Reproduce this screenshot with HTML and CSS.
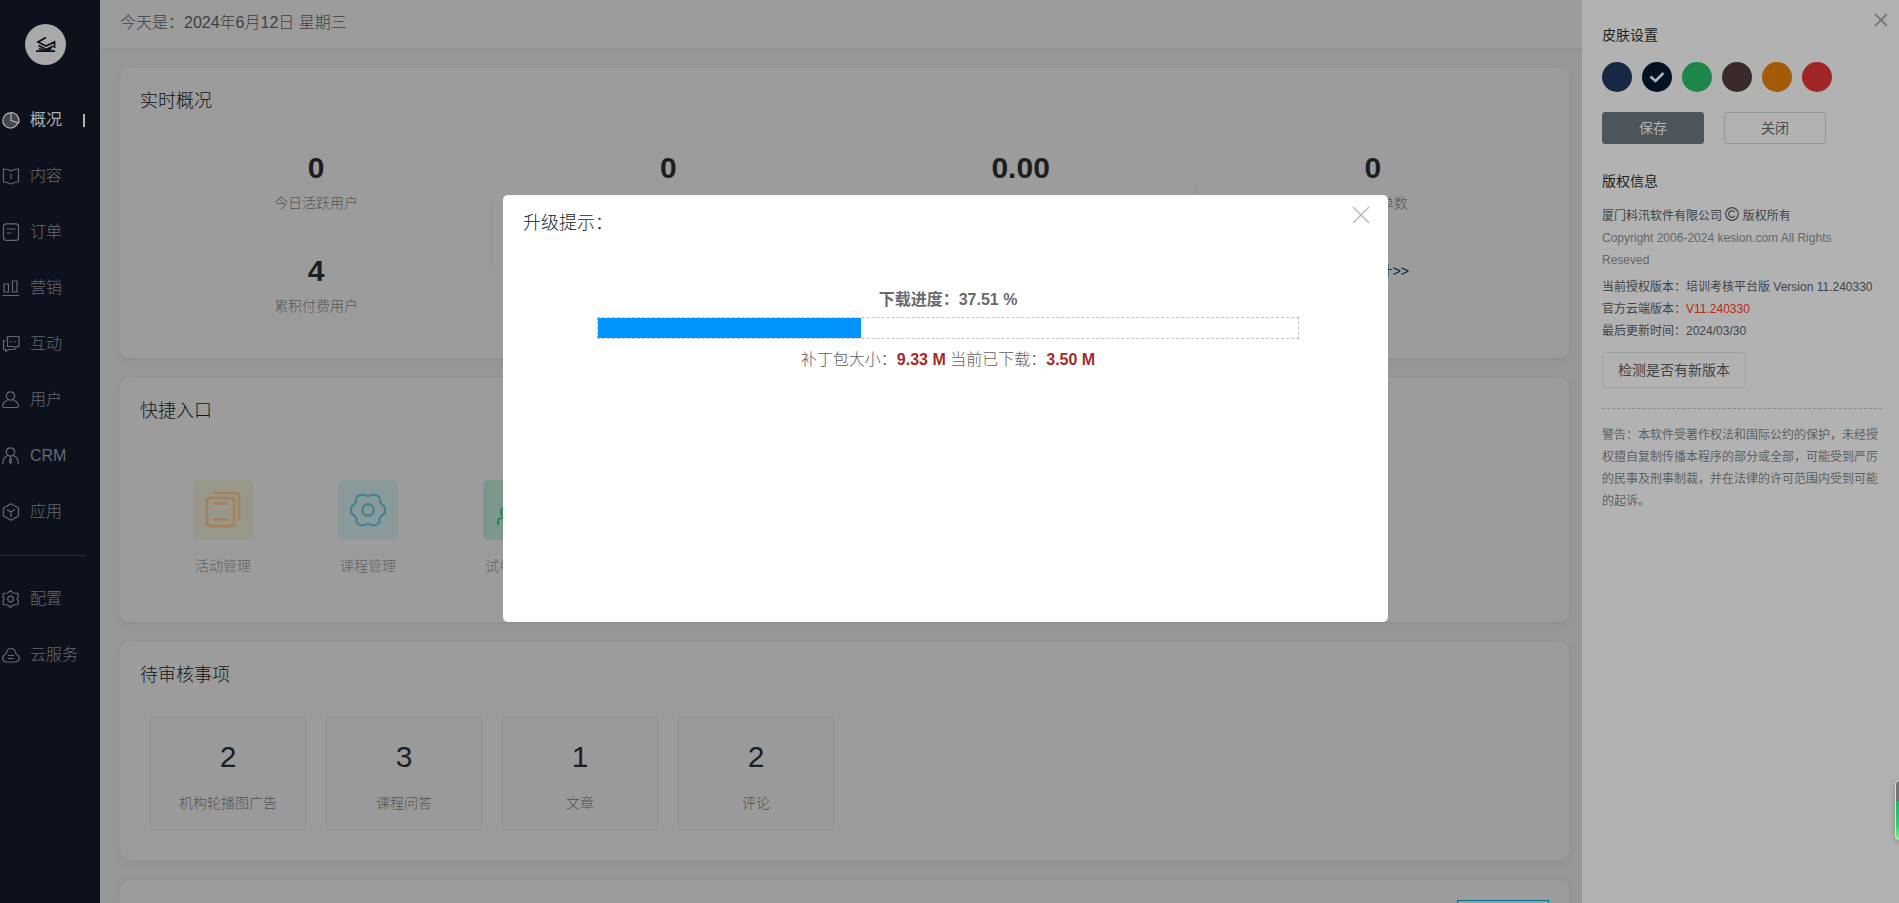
FILE: index.html
```html
<!DOCTYPE html>
<html lang="zh-CN">
<head>
<meta charset="utf-8">
<title>概况</title>
<link rel="stylesheet" href="styles.css">
</head>
<body>
<div class="app">
  <nav class="sidebar">
    <a class="logo" href="#" aria-label="首页"><svg viewBox="0 0 41 41" width="41" height="41" fill="none" stroke="#0d111b" stroke-width="1.8"><path d="M21 13.500L13 18l8 4 8.500-4v6M13.500 21.500l8 4 6.500-3.500M14 24.500l6.500 2.500 6-2.500M11 27.200h19"/></svg></a>
    <ul class="menu">
      <li><a class="item active" href="#"><svg class="ico" viewBox="0 0 18 18"><circle cx="8.500" cy="9.500" r="7.700" fill="#43464e"/><path d="M9 1.500v8l7.500 2.500A8 8 0 0 0 9 1.500z" fill="#43464e"/></svg>概况</a></li>
      <li><a class="item" href="#"><svg class="ico" viewBox="0 0 18 18"><path d="M1.500 2q4.500 0 7.500 2 3-2 7.500-2v13q-4 0-7.500 2-3.500-2-7.500-2zM9 7v5"/></svg>内容</a></li>
      <li><a class="item" href="#"><svg class="ico" viewBox="0 0 18 18"><rect x="1.500" y=".8" width="15" height="16.500" rx="2.500"/><path d="M4.500 6h9M4.500 10h5"/></svg>订单</a></li>
      <li><a class="item" href="#"><svg class="ico" viewBox="0 0 18 18"><path d="M2 5h4.500v8H2zM10.500 2h4.500v11h-4.500zM.5 16.500h16.500"/></svg>营销</a></li>
      <li><a class="item" href="#"><svg class="ico" viewBox="0 0 18 18"><path d="M5.500 1.500h11.500v10h-2l-1.500 1.500-2-1.500h-6zM3.500 5.500h-2v9h2v2l3-2h7M9 6v1.500M13 6v1.500"/></svg>互动</a></li>
      <li><a class="item" href="#"><svg class="ico" viewBox="0 0 18 18"><circle cx="8.500" cy="5" r="4.200"/><path d="M5.500 9.500Q.8 10.500.8 15q0 1.500 1.500 1.500h12.500q1.500 0 1.500-1.500 0-4.500-4.700-5.500"/></svg>用户</a></li>
      <li><a class="item" href="#"><svg class="ico" viewBox="0 0 18 18"><circle cx="8.500" cy="5" r="4.200"/><path d="M5.500 8.500Q.8 10.500.8 17M11.500 8.500q4.800 2 4.800 8.500M8.500 10.500l1.200 4-1.200 2-1.200-2z"/></svg>CRM</a></li>
      <li><a class="item" href="#"><svg class="ico" viewBox="0 0 18 18"><path d="M9 .8l7.500 4.200v8L9 17.200 1.500 13V5zM5 6.500L9 9l4-2.500M9 9v5"/></svg>应用</a></li>
    </ul>
    <ul class="menu menu-extra">
      <li><a class="item" href="#"><svg class="ico" viewBox="0 0 18 18"><path d="M8.500.8l3 2.200 4.500.5.2 3.500-1.200 2 1.200 2-.2 3.500-4.500.5-3 2.200-3-2.200-4.200-.5-.2-3.500L2.200 9 1 7l.3-3.500L5.500 3z"/><circle cx="8.500" cy="9" r="2.800"/></svg>配置</a></li>
      <li><a class="item" href="#"><svg class="ico" viewBox="0 0 18 18"><path d="M4 16q-3.200-.5-3.200-4Q.8 9 4 8q1-5.500 5-5.500T14 8q3.200 1 3.200 4 0 3.500-3.200 4zM6 9.500h6M6 12.500h6"/></svg>云服务</a></li>
    </ul>
  </nav>

  <main class="main">
    <header class="topbar">今天是：2024年6月12日 星期三</header>
    <div class="cards">
      <section class="card realtime">
        <h2>实时概况</h2>
        <div class="stats">
          <div class="stat rule"><b>0</b><span>今日活跃用户</span></div>
          <div class="stat"><b>0</b></div>
          <div class="stat rule rule-high"><b>0.00</b></div>
          <div class="stat"><b>0</b><span>今日订单数</span></div>
          <div class="stat"><b>4</b><span>累积付费用户</span></div>
          <div class="stat"></div>
          <div class="stat"></div>
          <div class="stat"><a href="#">查看统计&gt;&gt;</a></div>
        </div>
      </section>
      <section class="card quick">
        <h2>快捷入口</h2>
        <div class="links">
          <a class="link" href="#"><span class="tile sand"><svg viewBox="0 0 60 60"><rect x="14" y="18" width="27" height="28" rx="3"/><path d="M21 13h22q3 0 3 3v23M21 23.500h13M21 39.500h13"/></svg></span>活动管理</a>
          <a class="link" href="#"><span class="tile aqua"><svg viewBox="0 0 60 60"><path d="M25 14.500q5 3 10 0 5 1 6.500 3-.5 6 5 9 .8 3.500 0 7-5.500 3-5 9-2 2.500-6.500 3-5-3-10 0-4.500-.5-6.500-3 .5-6-5-9-.8-3.500 0-7 5.500-3 5-9 2-2.500 6.500-3z"/><circle cx="30" cy="30" r="5.800"/></svg></span>课程管理</a>
          <a class="link" href="#"><span class="tile mint"><svg viewBox="0 0 60 60"><circle cx="23" cy="32" r="5"/><path d="M15 45v-3q0-4 4-4h8q4 0 4 4v3"/></svg></span>试卷管理</a>
        </div>
      </section>
      <section class="card pending">
        <h2>待审核事项</h2>
        <div class="boxes">
          <a class="box" href="#"><b>2</b>机构轮播图广告</a>
          <a class="box" href="#"><b>3</b>课程问答</a>
          <a class="box" href="#"><b>1</b>文章</a>
          <a class="box" href="#"><b>2</b>评论</a>
        </div>
      </section>
      <section class="card last"><button class="range" type="button" aria-label="时间范围"></button></section>
    </div>
  </main>

  <aside class="panel">
    <button class="x panel-x" type="button" aria-label="关闭面板"><svg viewBox="0 0 14 14" width="14" height="14"><path d="M1 1l12 12M13 1L1 13" stroke="#74797c" stroke-width="1.800"/></svg></button>
    <h3>皮肤设置</h3>
    <div class="swatches">
      <button class="sw navy" type="button" aria-label="深蓝"></button>
      <button class="sw ink" type="button" aria-label="墨黑"><svg viewBox="0 0 30 30" width="30" height="30" fill="none" stroke="#b2b2b2" stroke-width="2.500"><path d="M8.500 14.500l5 4.500 8-8"/></svg></button>
      <button class="sw green" type="button" aria-label="绿色"></button>
      <button class="sw brown" type="button" aria-label="棕色"></button>
      <button class="sw orange" type="button" aria-label="橙色"></button>
      <button class="sw red" type="button" aria-label="红色"></button>
    </div>
    <div class="actions">
      <button class="btn solid" type="button">保存</button>
      <button class="btn" type="button">关闭</button>
    </div>
    <h3>版权信息</h3>
    <p class="company">厦门科汛软件有限公司 <svg viewBox="0 0 14 14" width="14" height="14" fill="none" stroke="#3f4346" stroke-width="1.200"><circle cx="7" cy="7" r="6.300"/><path d="M9.800 5.200A3.300 3.300 0 1 0 9.800 8.800"/></svg> 版权所有</p>
    <p class="soft">Copyright 2006-2024 kesion.com All Rights Reseved</p>
    <div class="version">
      <p>当前授权版本：培训考核平台版 Version 11.240330</p>
      <p>官方云端版本：<span class="new">V11.240330</span></p>
      <p>最后更新时间：2024/03/30</p>
    </div>
    <button class="check" type="button">检测是否有新版本</button>
    <p class="warning">警告：本软件受著作权法和国际公约的保护，未经授权擅自复制传播本程序的部分或全部，可能受到严厉的民事及刑事制裁，并在法律的许可范围内受到可能的起诉。</p>
  </aside>
</div>

<div class="overlay">
  <div class="dialog" role="dialog" aria-labelledby="dlg-title">
    <h2 id="dlg-title">升级提示：</h2>
    <button class="x dialog-x" type="button" aria-label="关闭"><svg viewBox="0 0 18 18" width="18" height="18"><path d="M1 1l16 16M17 1L1 17" stroke="#b5b6b8" stroke-width="1.300"/></svg></button>
    <div class="download">
      <strong>下载进度：37.51 %</strong>
      <div class="bar"><div class="fill" style="width:37.51%"></div></div>
      <p>补丁包大小：<b>9.33 M</b> 当前已下载：<b>3.50 M</b></p>
    </div>
  </div>
</div>
<div class="meter"></div>
</body>
</html>
```
FILE: styles.css
```css
* { box-sizing: border-box; margin: 0; padding: 0; }
html, body { height: 100%; overflow: hidden; }
body {
  font: 300 14px/20px "Liberation Sans", "Noto Sans CJK SC", sans-serif;
  background: #989898;
  color: #5a5d60;
}
a { color: inherit; text-decoration: none; }
ul { list-style: none; }
button { font: inherit; cursor: pointer; }
h2, h3 { font-weight: 300; }
h2 { font-size: 18px; line-height: 26px; color: #111315; }

.app { display: flex; height: 100vh; }

.sidebar { width: 100px; flex: none; background: #0d111b; padding-top: 24px; }
.logo {
  display: block; width: 41px; height: 41px; margin: 0 0 27px 25px;
  border-radius: 50%; background: #a9a9a9;
}
.item {
  display: flex; align-items: center; gap: 10px; height: 56px; padding-left: 2px;
  margin-right: 15px; font-size: 16px; color: #666973;
}
.ico { width: 18px; height: 18px; fill: none; stroke: currentColor; stroke-width: 1.2; }
.item.active { color: #b2b2b2; font-weight: 400; }
.item.active::after { content: ""; width: 2px; height: 13px; margin-left: auto; background: #b2b2b2; }
.menu-extra { border-top: 1px solid #292c35; margin: 15px 15px 0 0; padding-top: 15px; }
.menu-extra .item { margin-right: 0; }

.main { flex: 1; min-width: 0; overflow: hidden; }
.topbar {
  height: 48px; padding: 11px 20px; font-size: 16px; line-height: 24px;
  background: #9c9c9c; color: #3d4043; box-shadow: 0 2px 6px #919191;
}
.cards { display: grid; gap: 20px; padding: 20px 13px 0 20px; }
.card { background: #9c9c9c; border-radius: 10px; padding: 20px; box-shadow: 0 2px 10px #8f8f8f; }
.realtime { height: 290px; }
.quick { height: 244px; }
.pending { height: 218px; }
.last { height: 80px; text-align: right; }

.stats { display: grid; grid-template-columns: repeat(4, 1fr); grid-auto-rows: 103px; margin-top: 36px; }
.stat { position: relative; display: flex; flex-direction: column; align-items: center; gap: 7px; }
.stat b { font-size: 30px; line-height: 36px; font-weight: 700; color: #1d1e20; }
.stat span { color: #54575a; }
.stat a { color: #05223f; margin-top: 8px; }
.rule::after { content: ""; position: absolute; right: 0; top: 53px; width: 1px; height: 64px; background: #8c8c8c; }
.rule-high::after { top: 36px; }

.links { display: flex; gap: 85px; padding: 56px 53px 0; }
.link { display: flex; flex-direction: column; align-items: center; gap: 16px; width: 90px; margin: 0 -15px; color: #616365; }
.tile { width: 60px; height: 60px; border-radius: 5px; }
.tile svg { display: block; fill: none; stroke: currentColor; stroke-width: 2; }
.sand { background: #99978a; color: #a5825c; }
.sand svg { stroke-width: 2.5; stroke-linecap: round; }
.aqua { background: #8a9a9b; color: #3f8190; }
.mint { background: #7b988b; color: #258553; }

.boxes { display: flex; gap: 20px; padding: 28px 10px 0; }
.box {
  display: flex; flex-direction: column; align-items: center; gap: 18px;
  width: 156px; height: 114px; padding-top: 22px;
  border: 1px solid #929292; border-radius: 4px; background: #9a9a9a; color: #4f5255;
}
.box b { font-size: 30px; line-height: 36px; font-weight: 400; color: #1d1e20; }
.range { width: 92px; height: 32px; background: none; border: 1px solid #06708a; }

.panel {
  position: relative; width: 317px; flex: none; padding: 25px 17px 0 20px;
  background: #b2b2b2; color: #3f4346; font-size: 12px; line-height: 22px; font-weight: 400;
}
.panel h3 { font-size: 14px; line-height: 20px; color: #1d1f21; font-weight: 400; }
.x { display: block; background: none; border: 0; line-height: 0; }
.panel-x { position: absolute; top: 13px; right: 11px; }
.swatches { display: flex; gap: 10px; margin: 17px 0 20px; }
.sw { width: 30px; height: 30px; border: 0; border-radius: 50%; }
.navy { background: #182844; }
.ink { background: #021221; }
.green { background: #1d8649; }
.brown { background: #392b29; }
.orange { background: #a35b09; }
.red { background: #a02527; }
.actions { display: flex; gap: 20px; margin-bottom: 27px; }
.btn {
  width: 102px; height: 32px; border: 1px solid #8f9698; border-radius: 3px;
  background: none; color: #474c50; font-size: 14px;
}
.btn.solid { background: #4d565b; border-color: #4d565b; color: #b2b2b2; }
.company { margin-top: 14px; }
.company svg { vertical-align: -1px; }
.soft { color: #63676a; margin-bottom: 5px; }
.new { color: #b22b18; }
.check {
  margin-top: 10px; padding: 0 15px; height: 36px; border: 1px solid #9da2a2; border-radius: 4px;
  background: none; color: #3f4346; font-size: 14px;
}
.warning { margin: 20px 0 0; padding-top: 15px; border-top: 1px dashed #8b8b8b; color: #5b6164; }

.overlay { position: fixed; inset: 0; padding-top: 195px; display: flex; justify-content: center; align-items: flex-start; }
.dialog {
  position: relative; width: 885px; height: 427px; margin-right: 8px;
  padding: 15px 20px; background: #fff; border-radius: 5px; color: #5d6065;
}
.dialog h2 { color: #222426; }
.dialog-x { position: absolute; top: 11px; right: 18px; }
.download { margin: 50px 69px 0 74px; text-align: center; font-size: 16px; line-height: 28px; }
.download strong { display: block; font-weight: 700; color: #676a6f; }
.bar { height: 22px; border: 1px dashed #c6c6c6; margin: 3px 0 7px; }
.fill { height: 100%; background: #0094ff; }
.download p b { color: #a52a2a; font-weight: 700; }

.meter {
  position: fixed; right: -20px; top: 780px; width: 24px; height: 60px;
  border: 1px solid #dedede; border-radius: 4px; box-shadow: 0 2px 6px #888;
  background: linear-gradient(#747474 35%, #1cb860 35%, #2fce69 75%, #7cf07c);
}
```
